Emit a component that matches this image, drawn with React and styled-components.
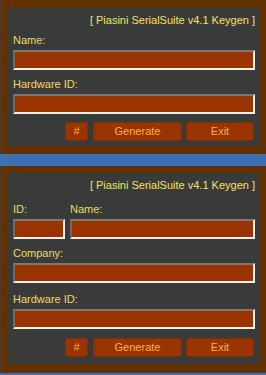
import React from "react";
import styled, { createGlobalStyle } from "styled-components";

const GlobalStyle = createGlobalStyle`
  html, body {
    margin: 0;
    padding: 0;
    background: #3c70b2;
    overflow: hidden;
  }
  body {
    font-family: "Liberation Sans", Arial, sans-serif;
    font-size: 11px;
  }
`;

const Page = styled.div`
  display: flex;
  flex-direction: column;
  gap: 12px;
  width: 266px;
  height: 375px;
`;

const Window = styled.div`
  background: #633100;
  padding: ${(p) => p.$pad};
  box-shadow: inset 2px 0 0 #4a3a2c;
`;

const Panel = styled.div`
  background: #393b3b;
  display: flex;
  flex-direction: column;
  padding: ${(p) => p.$pad};
`;

const Title = styled.div`
  color: #f4e45a;
  line-height: 14px;
  text-align: right;
  white-space: nowrap;
`;

const Row = styled.div`
  display: flex;
  gap: 5px;
`;

const Field = styled.div`
  display: flex;
  flex-direction: column;
  width: ${(p) => p.$w || "auto"};
  flex: ${(p) => (p.$w ? "none" : "1")};
  margin-top: ${(p) => p.$mt};
`;

const Label = styled.label`
  color: #ecdc60;
  line-height: 14px;
  margin-bottom: 3px;
  white-space: nowrap;
`;

const Input = styled.input`
  box-sizing: border-box;
  height: 20px;
  width: 100%;
  margin: 0;
  padding: 0 3px;
  background: #993300;
  color: #ffd060;
  font: inherit;
  border-style: solid;
  border-width: 2px;
  border-color: #80786c #f4f1ea #f4f1ea #6f6a62;
  outline: none;
`;

const Buttons = styled.div`
  display: flex;
  justify-content: flex-end;
  gap: 4px;
  margin: ${(p) => p.$mt} 1px 0 0;
`;

const Button = styled.button`
  box-sizing: border-box;
  width: ${(p) => p.$w};
  height: 19px;
  margin: 0 ${(p) => p.$gap || "0"} 0 0;
  padding: 0;
  border: 1px solid #7e3000;
  border-radius: 2px;
  background: #993300;
  color: #ffb236;
  font: inherit;
  line-height: 17px;
  cursor: pointer;
`;

const ButtonRow = ({ mt }) => (
  <Buttons $mt={mt}>
    <Button $w="23px" $gap="1px">#</Button>
    <Button $w="89px">Generate</Button>
    <Button $w="68px">Exit</Button>
  </Buttons>
);

const App = () => (
  <>
    <GlobalStyle />
    <Page>
      <Window $pad="8px 7px 8px 8px">
        <Panel $pad="5px 4px 5px 5px">
          <Title>[ Piasini SerialSuite v4.1 Keygen ]</Title>
          <Field $mt="6px">
            <Label>Name:</Label>
            <Input />
          </Field>
          <Field $mt="7px">
            <Label>Hardware ID:</Label>
            <Input />
          </Field>
          <ButtonRow mt="8px" />
        </Panel>
      </Window>
      <Window $pad="7px 7px 9px 8px">
        <Panel $pad="5px 4px 7px 5px">
          <Title>[ Piasini SerialSuite v4.1 Keygen ]</Title>
          <Row>
            <Field $w="52px" $mt="10px">
              <Label>ID:</Label>
              <Input />
            </Field>
            <Field $mt="10px">
              <Label>Name:</Label>
              <Input />
            </Field>
          </Row>
          <Field $mt="7px">
            <Label>Company:</Label>
            <Input />
          </Field>
          <Field $mt="9px">
            <Label>Hardware ID:</Label>
            <Input />
          </Field>
          <ButtonRow mt="9px" />
        </Panel>
      </Window>
    </Page>
  </>
);

export default App;
